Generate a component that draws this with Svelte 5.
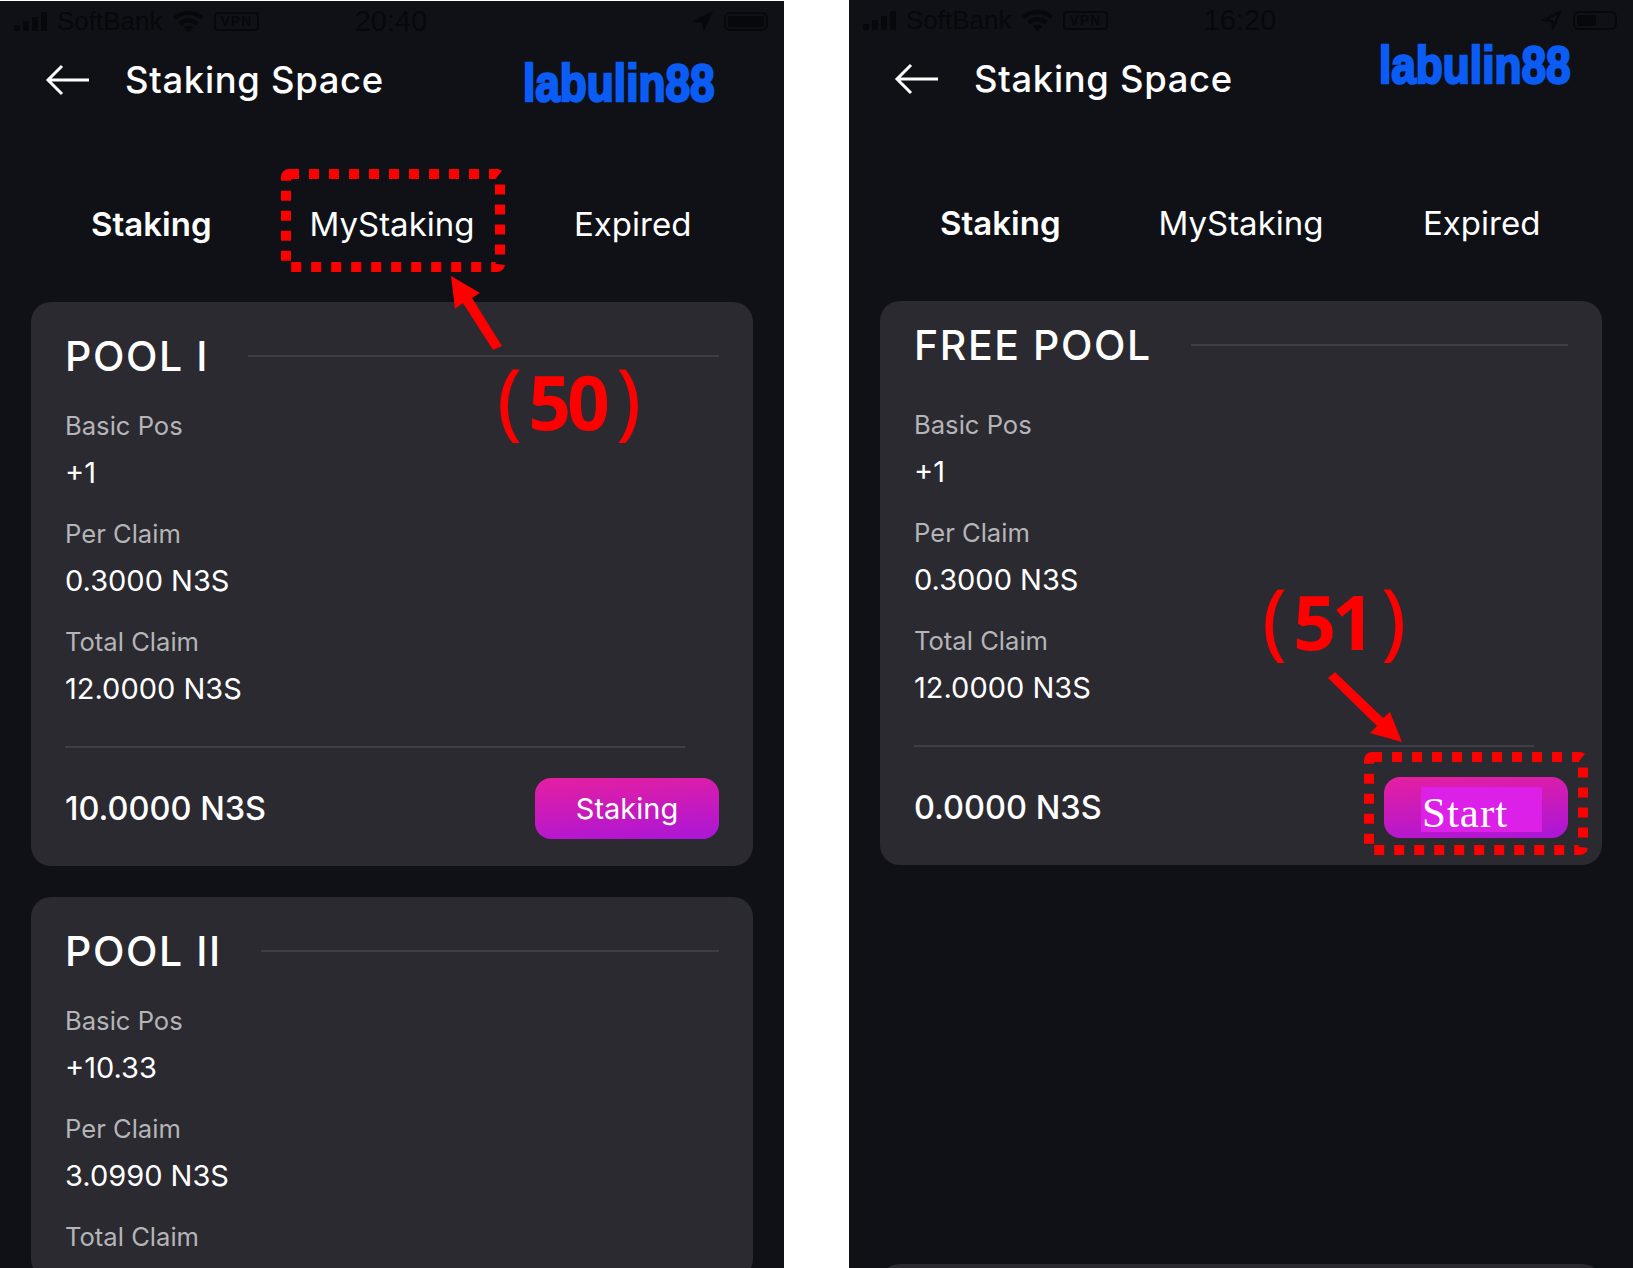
<script lang="ts">
  const poolOne = [
    { label: 'Basic Pos', value: '+1' },
    { label: 'Per Claim', value: '0.3000 N3S' },
    { label: 'Total Claim', value: '12.0000 N3S' },
  ];
  const poolTwo = [
    { label: 'Basic Pos', value: '+10.33' },
    { label: 'Per Claim', value: '3.0990 N3S' },
    { label: 'Total Claim', value: '' },
  ];
  const tabs = ['Staking', 'MyStaking', 'Expired'];
</script>

{#snippet statusBar(time: string, charge: number, outlined: boolean)}
  <div class="status">
    <div class="status-left">
      <svg class="bars" width="34" height="19" viewBox="0 0 34 19" fill="currentColor">
        <rect x="0" y="13" width="6" height="6" rx="1" />
        <rect x="9" y="9" width="6" height="10" rx="1" />
        <rect x="18" y="5" width="6" height="14" rx="1" />
        <rect x="27" y="0" width="6" height="19" rx="1" />
      </svg>
      <span class="carrier">SoftBank</span>
      <svg class="wifi" width="33" height="23" viewBox="0 0 31 22" fill="none" stroke="currentColor" stroke-width="4">
        <path d="M2 8C10 1 21 1 29 8" />
        <path d="M7 13C12 9 19 9 24 13" />
        <path d="M15.500 21L11 16.500C14 14.500 17 14.500 20 16.500Z" fill="currentColor" stroke="none" />
      </svg>
      <span class="vpn">VPN</span>
    </div>
    <div class="time">{time}</div>
    <div class="status-right">
      <svg width="20" height="20" viewBox="0 0 20 20" fill={outlined ? 'none' : 'currentColor'} stroke="currentColor" stroke-width="2">
        <path d="M18 2L2 10L10 11L11 18Z" />
      </svg>
      <div class="battery"><div class="charge" style="width: {charge}%"></div></div>
    </div>
  </div>
{/snippet}

{#snippet header()}
  <div class="header">
    <svg width="44" height="32" viewBox="0 0 44 32" fill="none" stroke="#fff" stroke-width="3">
      <path d="M17 2L3 16L17 30M3 16H44" />
    </svg>
    <span class="title">Staking Space</span>
  </div>
  <div class="tabs">
    {#each tabs as tab, i}
      <span class="tab" class:active={i === 0}>{tab}</span>
    {/each}
  </div>
{/snippet}

{#snippet head(name: string, rows: { label: string; value: string }[])}
  <div class="card-head">
    <h2>{name}</h2>
    <div class="rule"></div>
  </div>
  <div class="fields">
    {#each rows as row}
      <div class="field">
        <span class="label">{row.label}</span>
        {#if row.value}<span class="value">{row.value}</span>{/if}
      </div>
    {/each}
  </div>
{/snippet}

<div class="page">
  <div class="phone first">
    {@render statusBar('20:40', 100, false)}
    {@render header()}
    <div class="cards">
      <section class="card">
        {@render head('POOL I', poolOne)}
        <div class="divider"></div>
        <div class="foot">
          <span class="amount">10.0000 N3S</span>
          <button class="action">Staking</button>
        </div>
      </section>
      <section class="card">
        {@render head('POOL II', poolTwo)}
      </section>
    </div>
  </div>

  <div class="phone">
    {@render statusBar('16:20', 52, true)}
    {@render header()}
    <div class="cards">
      <section class="card raised">
        {@render head('FREE POOL', poolOne)}
        <div class="divider"></div>
        <div class="foot">
          <span class="amount">0.0000 N3S</span>
          <button class="action"><span class="patch">Start</span></button>
        </div>
      </section>
      <section class="card next"></section>
    </div>
  </div>

  <!-- annotations pasted on top of the screenshots -->
  <span class="logo logo-left">labulin88</span>
  <span class="logo logo-right">labulin88</span>
  <div class="step step-50"><span class="paren">(</span><span class="num">50</span><span class="paren">)</span></div>
  <div class="step step-51"><span class="paren">(</span><span class="num">51</span><span class="paren">)</span></div>
  <svg class="marks" width="1633" height="1268" viewBox="0 0 1633 1268" fill="none">
    <rect x="286" y="174" width="214" height="93" rx="3" stroke="#f00" stroke-width="10" stroke-dasharray="10 10" />
    <rect x="1369" y="757" width="214" height="93" rx="3" stroke="#f00" stroke-width="10" stroke-dasharray="10 10" />
    <polygon points="451,276 480,293 472,298 502,346 493,350 463,303 455,309" fill="#f00" />
    <polygon points="1402,742 1370,733 1377,726 1328,678 1335,672 1383,718 1390,712" fill="#f00" />
  </svg>
</div>

<style>
  :global(body) { margin: 0; background: #fff; }
  .page {
    position: relative; width: 1633px; height: 1268px; overflow: hidden;
    display: flex; justify-content: space-between; background: #fff;
    font-family: Inter, "Liberation Sans", sans-serif; color: #fff;
  }
  .phone { width: 784px; height: 1268px; background: #0f1117; overflow: hidden; }
  .phone.first { margin-top: 1px; }

  .status {
    height: 40px; display: grid; grid-template-columns: 1fr auto 1fr; align-items: center;
    padding: 0 16px 0 14px; color: #07080b; font-family: "Liberation Sans", sans-serif;
  }
  .status-left { display: flex; align-items: center; gap: 9px; }
  .carrier { font-size: 26px; }
  .vpn {
    font-size: 14px; font-weight: 700; line-height: 13px; padding: 1px 5px;
    border: 2px solid currentColor; border-radius: 4px; letter-spacing: 1px;
  }
  .time { font-size: 29px; }
  .status-right { display: flex; align-items: center; justify-content: flex-end; gap: 11px; }
  .battery {
    width: 44px; height: 19px; box-sizing: border-box; border: 2px solid currentColor;
    border-radius: 6px; padding: 2px;
  }
  .charge { height: 100%; background: currentColor; border-radius: 2px; }

  .header { display: flex; align-items: center; gap: 36px; height: 78px; padding: 0 0 2px 45px; }
  .title { font-size: 36.400px; font-weight: 500; letter-spacing: 0.7px; }

  .tabs {
    display: grid; grid-template-columns: repeat(3, 1fr); margin: 80px 31px 0;
    height: 45px; align-items: center; text-align: center;
  }
  .tab { font-size: 33px; font-weight: 400; }
  .tab.active { font-weight: 600; }

  .cards { display: flex; flex-direction: column; gap: 31px; margin: 56px 31px 0; }
  .card { background: #2a2a30; border-radius: 20px; padding: 34px 34px 27px; min-height: 300px; }
  .card.raised { padding-top: 24px; }
  .card.next { margin-top: 368px; }
  .card-head { display: flex; align-items: center; gap: 39px; height: 40px; }
  h2 { margin: 0; font-size: 41px; font-weight: 500; line-height: 40px; white-space: nowrap; letter-spacing: 1.600px; }
  .rule { flex: 1; height: 2px; background: #3e3e44; margin-top: -1px; }

  .fields { display: flex; flex-direction: column; gap: 29px; margin-top: 35px; }
  .raised .fields { margin-top: 45px; }
  .field { display: flex; flex-direction: column; gap: 15px; }
  .label { font-size: 25.600px; line-height: 30px; color: #b5b5b8; }
  .value { font-size: 29px; line-height: 34px; }

  .divider { height: 2px; background: #3e3e44; margin: 40px 34px 0 0; }
  .foot { display: flex; align-items: center; justify-content: space-between; margin-top: 30px; }
  .amount { font-size: 32.500px; font-weight: 500; }
  .action {
    position: relative; width: 184px; height: 61px; border: 0; border-radius: 16px;
    background: linear-gradient(175deg, #e61fa0, #aa16d8); color: #fff;
    font: 400 29px Inter, "Liberation Sans", sans-serif;
  }
  .patch {
    position: absolute; left: 37px; top: 10px; width: 121px; height: 45px; box-sizing: border-box;
    padding-left: 1px; background: #dc20e8; text-align: left;
    font: 43px/52px "Liberation Serif", serif; letter-spacing: 1px;
  }

  .logo {
    position: absolute; font: 700 52px/1 "Liberation Sans", sans-serif;
    color: #0a5cf5; -webkit-text-stroke: 2.500px #0a5cf5;
    transform: scaleX(0.85); transform-origin: left center;
  }
  .logo-left { left: 523px; top: 57px; }
  .logo-right { left: 1379px; top: 39px; }

  .step {
    position: absolute; display: flex; align-items: center; color: #f00; line-height: 1;
    font-family: "Noto Sans", sans-serif;
  }
  .step-50 { left: 497px; top: 362px; }
  .step-51 { left: 1262px; top: 582px; }
  .num { font-size: 75px; font-weight: 700; margin: 0 10px 0 6px; letter-spacing: -4px; }
  .paren { font-size: 84px; font-weight: 400; margin-top: -6px; }

  .marks { position: absolute; left: 0; top: 0; pointer-events: none; }
</style>
